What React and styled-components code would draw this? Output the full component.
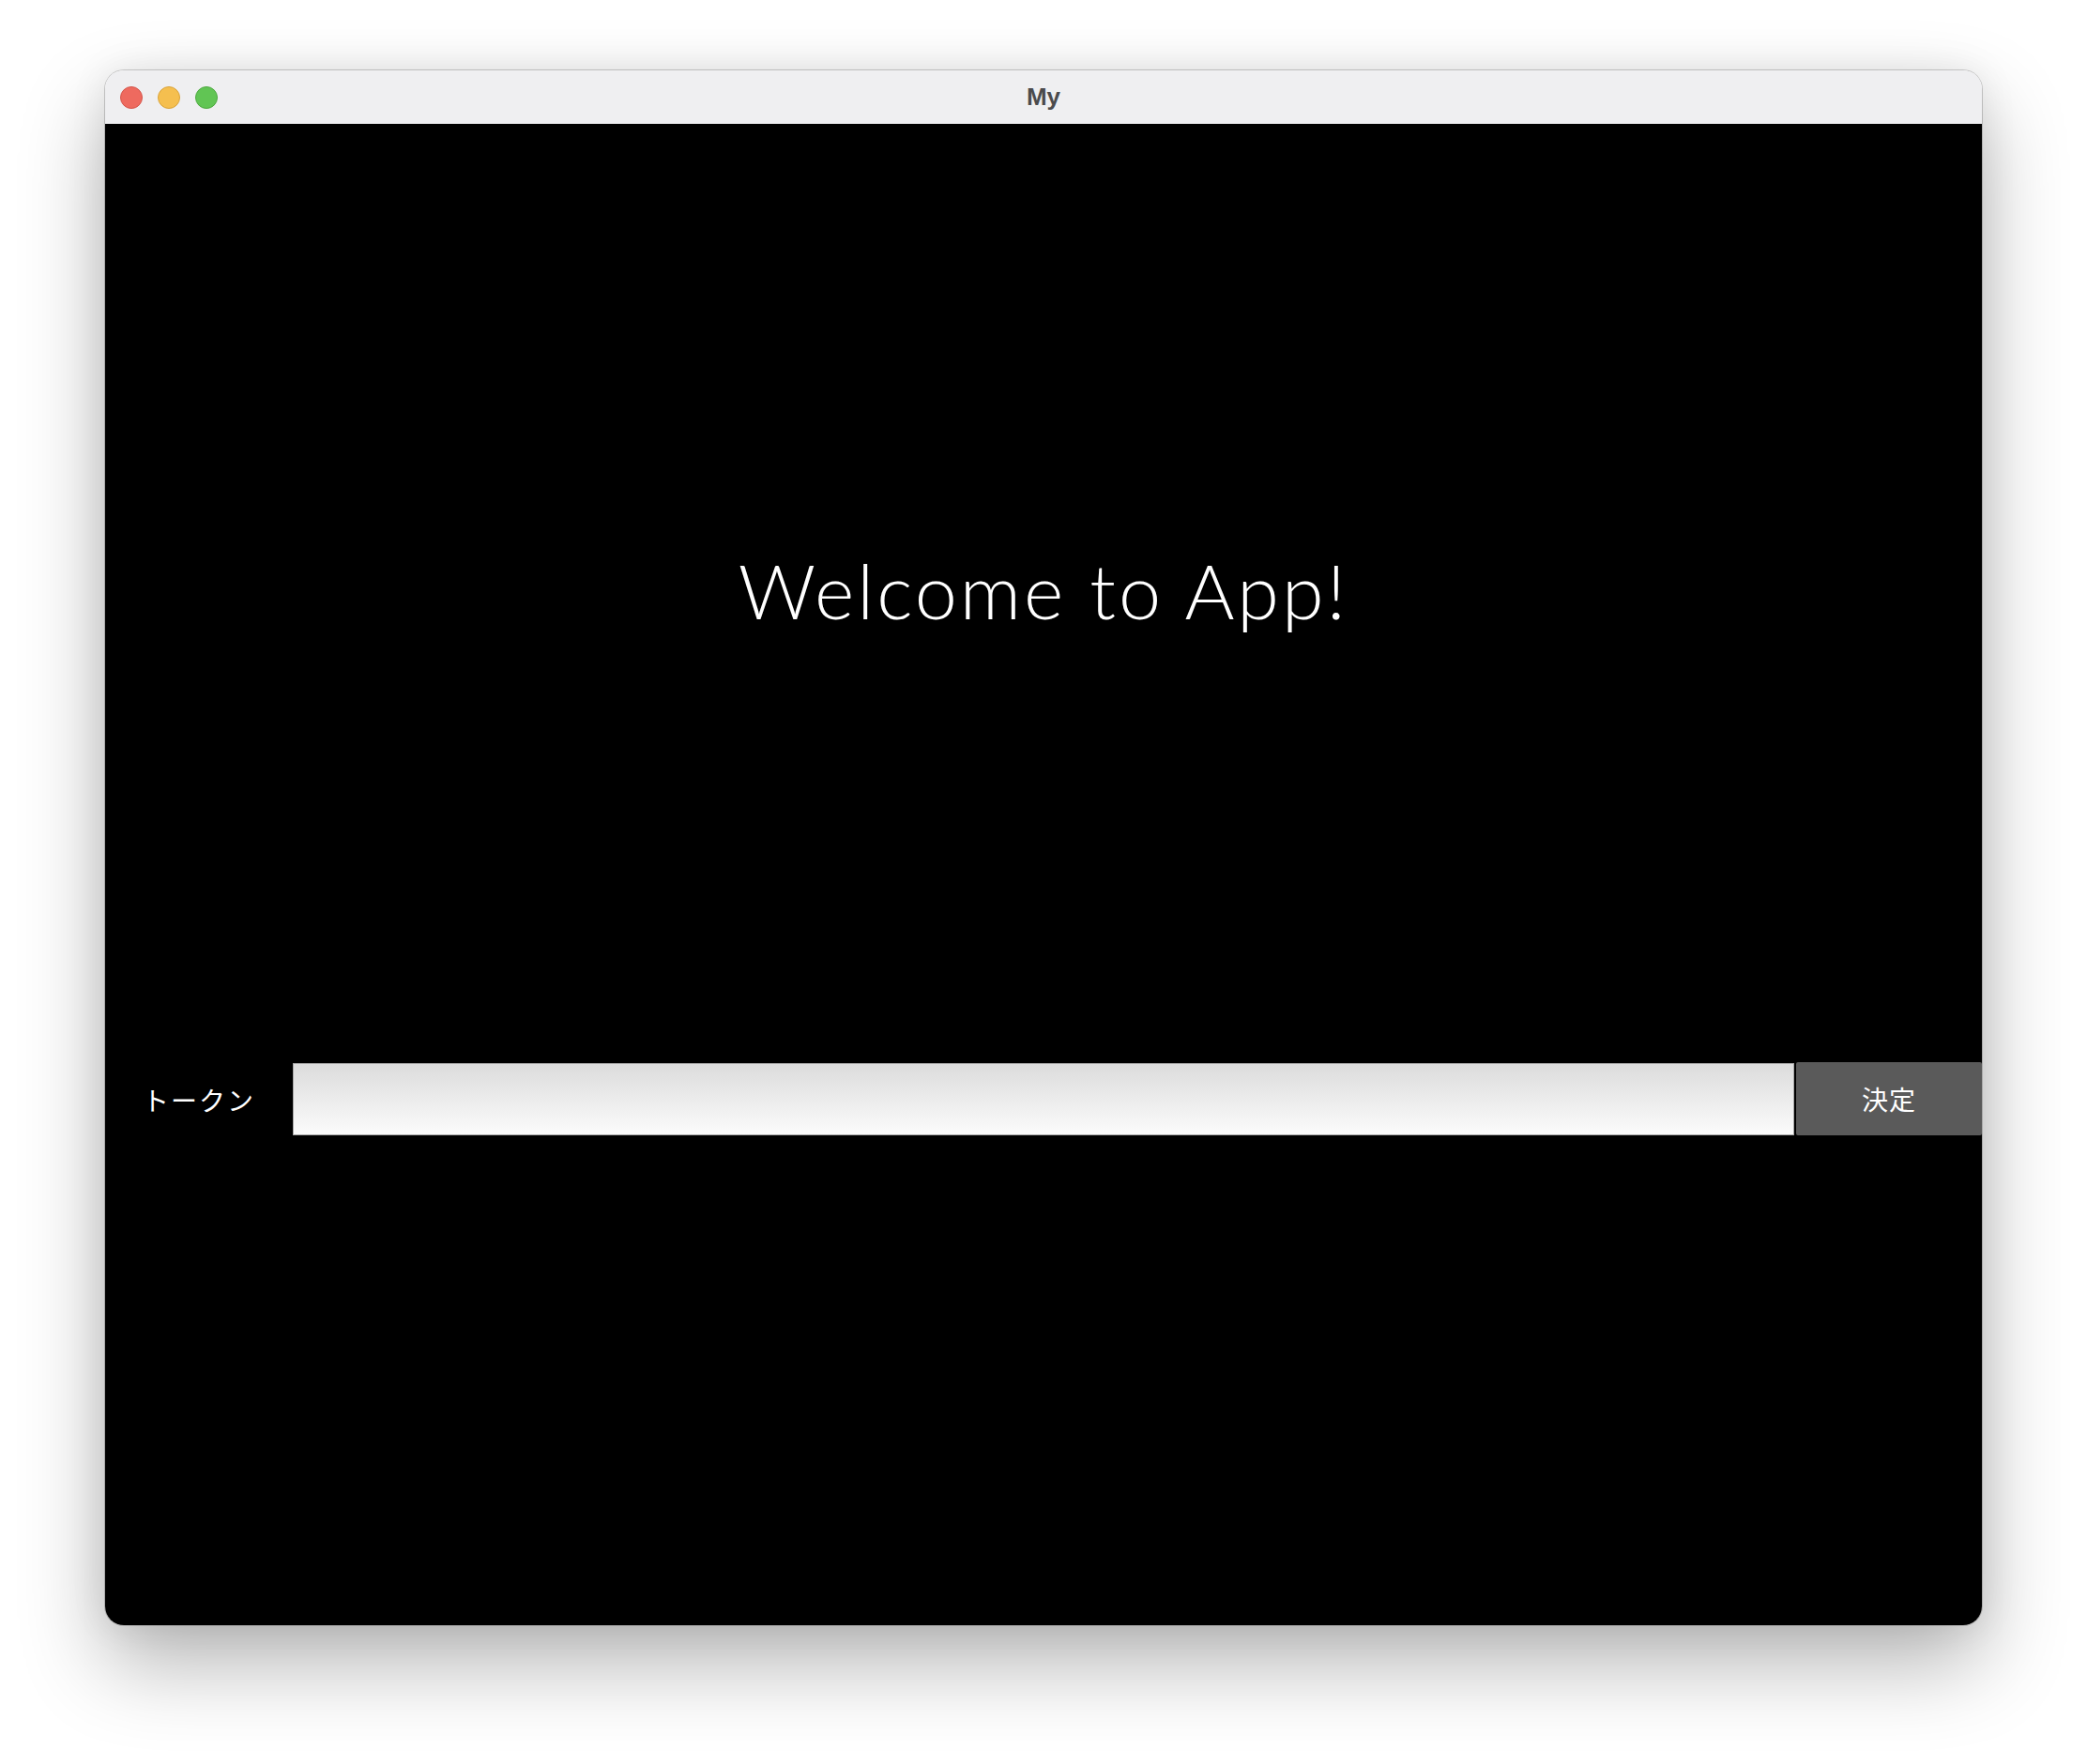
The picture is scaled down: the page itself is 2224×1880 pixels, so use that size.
import styled, { createGlobalStyle } from "styled-components";
import { useState } from "react";

const GlobalStyle = createGlobalStyle`
  html, body {
    margin: 0;
    padding: 0;
    background: #ffffff;
  }
  body {
    font-family: "Lato", "Noto Sans CJK JP", sans-serif;
  }
`;

export default function App() {
  const [token, setToken] = useState("");

  return (
    <>
      <GlobalStyle />
      <Page>
        <Window>
          <TitleBar>
            <Lights>
              <Light color="#ee6a5f" edge="#d4564b" />
              <Light color="#f5bf4f" edge="#d9a33b" />
              <Light color="#61c554" edge="#4fa942" />
            </Lights>
            <Title>My</Title>
          </TitleBar>
          <Content>
            <Heading>Welcome to App!</Heading>
            <Row>
              <Label>トークン</Label>
              <Input value={token} onChange={(e) => setToken(e.target.value)} />
              <Btn>決定</Btn>
            </Row>
          </Content>
        </Window>
      </Page>
    </>
  );
}

const Page = styled.div`
  width: 2224px;
  height: 1880px;
  box-sizing: border-box;
  padding: 75px 112px 0;
`;

const Window = styled.div`
  width: 2000px;
  height: 1657px;
  border-radius: 20px;
  overflow: hidden;
  display: flex;
  flex-direction: column;
  box-shadow: 0 0 0 1px rgba(0, 0, 0, 0.18), 0 40px 90px rgba(0, 0, 0, 0.3),
    0 0 40px rgba(0, 0, 0, 0.08);
`;

const TitleBar = styled.div`
  position: relative;
  height: 57px;
  flex-shrink: 0;
  background: #efeff1;
  display: flex;
  align-items: center;
  justify-content: center;
`;

const Lights = styled.div`
  position: absolute;
  left: 16px;
  top: 17px;
  display: flex;
  gap: 16px;
`;

const Light = styled.span`
  width: 24px;
  height: 24px;
  box-sizing: border-box;
  border-radius: 50%;
  background: ${(p) => p.color};
  border: 1px solid ${(p) => p.edge};
`;

const Title = styled.span`
  font-family: "Liberation Sans", "Noto Sans", sans-serif;
  font-weight: bold;
  font-size: 26px;
  color: #4b4b4d;
`;

const Content = styled.div`
  flex: 1;
  background: #000000;
  display: flex;
  flex-direction: column;
`;

const Heading = styled.h1`
  margin: 448px 0 0;
  text-align: center;
  font-family: "Lato", sans-serif;
  font-weight: 300;
  font-size: 81px;
  line-height: 1.2;
  letter-spacing: 3px;
  color: #ffffff;
`;

const Row = styled.div`
  margin-top: 456px;
  height: 77px;
  display: flex;
  align-items: stretch;
`;

const Label = styled.div`
  width: 200px;
  display: flex;
  align-items: center;
  justify-content: center;
  font-family: "Noto Sans CJK JP", sans-serif;
  font-size: 28px;
  color: #ffffff;
  letter-spacing: 2px;
`;

const Input = styled.input`
  width: 1600px;
  box-sizing: border-box;
  border: 1px solid #a8a8a8;
  outline: none;
  margin: 0;
  padding: 0 12px;
  font-size: 28px;
  background: linear-gradient(#dcdcdc, #fbfbfb);
`;

const Btn = styled.button`
  flex: 1;
  margin: -1px 0 0 2px;
  border: none;
  border-radius: 2px;
  background: #5a5a5a;
  color: #ffffff;
  font-family: "Noto Sans CJK JP", sans-serif;
  font-size: 28px;
  letter-spacing: 1px;
  cursor: pointer;
`;
